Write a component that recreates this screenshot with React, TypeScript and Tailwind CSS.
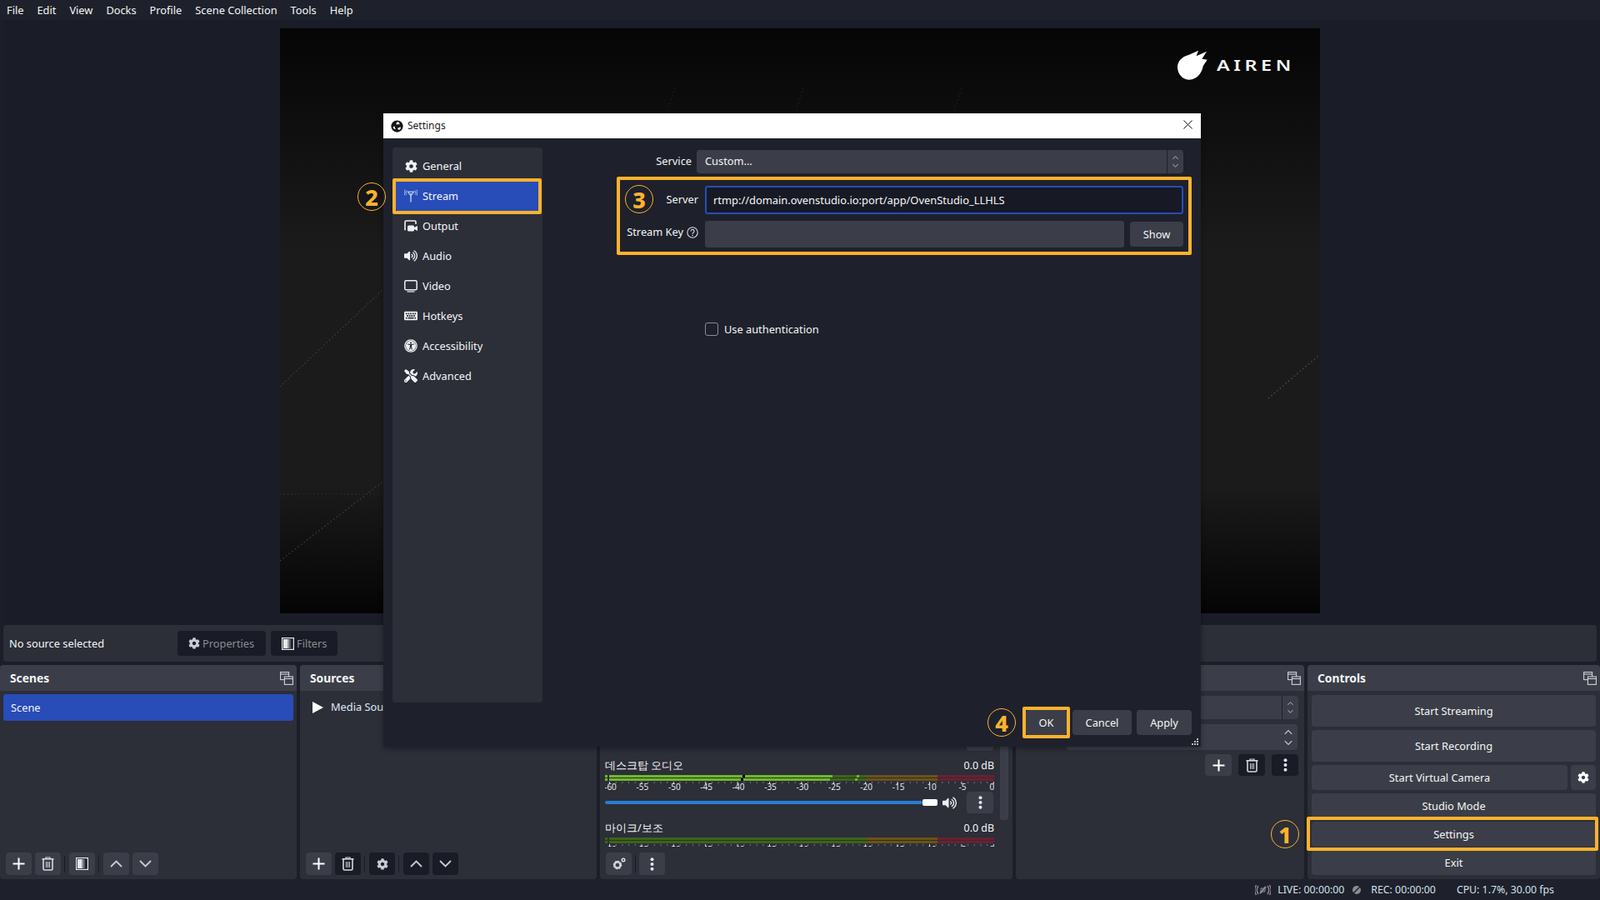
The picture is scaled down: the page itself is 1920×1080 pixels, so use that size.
import React from "react";
import { FaCog, FaVolumeUp, FaKeyboard, FaUniversalAccess, FaTools } from "react-icons/fa";

const Plus = () => (
  <svg width="15" height="15" viewBox="0 0 15 15"><path d="M7.5 0.5v14M0.5 7.5h14" stroke="#fff" strokeWidth="2" /></svg>
);
const Trash = () => (
  <svg width="15" height="17" viewBox="0 0 15 17" fill="none" stroke="#d5d7de">
    <path d="M0.5 2.8h14" strokeWidth="1.6" />
    <path d="M5 2.5V1h5v1.5" strokeWidth="1.2" />
    <path d="M2 3v11.5A1.5 1.5 0 0 0 3.5 16h8a1.5 1.5 0 0 0 1.5-1.5V3" strokeWidth="1.6" />
    <path d="M5.5 6v7M7.5 6v7M9.5 6v7" strokeWidth="1" />
  </svg>
);
const FilterIcon = () => (
  <svg width="15" height="15" viewBox="0 0 15 15">
    <rect x="0.6" y="0.6" width="13.8" height="13.8" fill="#1d1f29" stroke="#e6e7ea" strokeWidth="1.2" />
    <rect x="2" y="2" width="5" height="11" fill="#e6e7ea" />
    <rect x="7" y="2" width="2" height="11" fill="#9a9ba1" />
    <rect x="9" y="2" width="2" height="11" fill="#5a5b63" />
  </svg>
);
const Up = () => (
  <svg width="15" height="9" viewBox="0 0 15 9" fill="none"><path d="M1 8l6.5-6.5L14 8" stroke="#c9cbd2" strokeWidth="1.8" /></svg>
);
const Down = () => (
  <svg width="15" height="9" viewBox="0 0 15 9" fill="none"><path d="M1 1l6.5 6.5L14 1" stroke="#c9cbd2" strokeWidth="1.8" /></svg>
);
const Dots = () => (
  <svg width="5" height="16" viewBox="0 0 5 16" fill="#e4e5ea"><circle cx="2.5" cy="2.2" r="2" /><circle cx="2.5" cy="8" r="2" /><circle cx="2.5" cy="13.8" r="2" /></svg>
);
const FloatIcon = () => (
  <svg width="16" height="16" viewBox="0 0 16 16" fill="none" stroke="#d0d2d8" strokeWidth="1.1">
    <rect x="0.6" y="0.6" width="10" height="9" fill="#3b3e48" />
    <path d="M0.6 3h10" />
    <rect x="5.4" y="6" width="10" height="9.4" fill="#3b3e48" />
    <path d="M5.4 8.5h10" />
  </svg>
);
const Updown = ({ big }: { big?: boolean }) => (
  <svg width={big ? 12 : 9} height={big ? 22 : 16} viewBox="0 0 10 18" fill="none" stroke="#c9cbd2" strokeWidth="1">
    <path d="M1.5 5.5L5 2l3.5 3.5M1.5 12.5L5 16l3.5-3.5" />
  </svg>
);
const TwoGears = () => (
  <svg width="16" height="15" viewBox="0 0 16 15" fill="#e4e5ea">
    <circle cx="6" cy="9" r="3.6" fill="none" stroke="#e4e5ea" strokeWidth="2.6" strokeDasharray="1.8 0.3" />
    <circle cx="6" cy="9" r="4.6" fill="none" stroke="#e4e5ea" strokeWidth="1.2" strokeDasharray="1.6 2" />
    <circle cx="13" cy="3" r="1.8" fill="none" stroke="#e4e5ea" strokeWidth="1.4" />
  </svg>
);

const IconBtn = ({ dark, children }: { dark?: boolean; children: React.ReactNode }) => (
  <div className={`w-[31px] h-[27px] rounded-[4px] flex items-center justify-center shrink-0 ${dark ? "bg-[#191c26]" : "bg-[#3b3e48]"}`}>{children}</div>
);

const DockHeader = ({ title }: { title: string }) => (
  <div className="h-[31px] shrink-0 bg-[#3b3e48] rounded-t-[4px] flex items-center justify-between pl-[12px] pr-[4px]">
    <span className="font-bold text-[13.8px] pt-px">{title}</span>
    <FloatIcon />
  </div>
);

const CtlBtn = ({ label, h }: { label: string; h: string }) => (
  <div className={`${h} rounded-[4px] bg-[#3b3e48] flex items-center justify-center w-full pt-px`}>{label}</div>
);

const Circle = ({ n, cls }: { n: number; cls: string }) => (
  <div className={`absolute ${cls} w-[34px] h-[34px] rounded-full border-[1.5px] border-[#fdb22e] flex items-center justify-center text-[27px] font-extrabold text-[#fdb22e] leading-none font-['Open_Sans',sans-serif]`}>
    {n}
  </div>
);
const Box = ({ cls }: { cls: string }) => <div className={`absolute ${cls} border-[4px] border-[#fdb22e] rounded-[2px] pointer-events-none`} />;

const meterLabels = [-60, -55, -50, -45, -40, -35, -30, -25, -20, -15, -10, -5, 0];

const Meter = ({ active }: { active: boolean }) => {
  const x0 = 5;
  const pitch = 7.68;
  const green = 314;
  const yellow = 399;
  const g = active ? "#6fb82b" : "#3d6515";
  return (
    <svg width="467" height="20" className="block">
      {[0, 4].map((y) => (
        <g key={y}>
          <rect x="0" y={y} width="3" height="3" fill={g} />
          <rect x="5" y={y} width={green - 5} height="3" fill="#3d6515" />
          {active && <rect x="5" y={y} width={y === 0 ? 268 : 265} height="3" fill="#6fb82b" />}
          <rect x={green} y={y} width={yellow - green} height="3" fill="#6b5314" />
          <rect x={yellow} y={y} width={467 - yellow} height="3" fill="#6b2031" />
          {active && <rect x={y === 0 ? 165 : 163} y={y} width="3" height="3" fill="#000" />}
          {active && <rect x={y === 0 ? 302 : 300} y={y} width="3" height="3" fill="#6fb82b" />}
        </g>
      ))}
      {Array.from({ length: 61 }).map((_, i) => (
        <rect key={i} x={x0 + i * pitch} y="8" width="1" height={i % 5 === 0 ? 3 : 2} fill={i % 5 === 0 ? "#d8dae0" : "#777983"} />
      ))}
      {meterLabels.map((v, i) => (
        <text key={v} x={x0 + 1.5 + i * 38.4 - (v === 0 ? 3 : 0)} y="18" textAnchor="middle" fontSize="10" fill="#f0f2f6" fontFamily="'Open Sans',sans-serif">
          {v}
        </text>
      ))}
    </svg>
  );
};

const Channel = ({ name, active }: { name: string; active: boolean }) => (
  <div className="shrink-0 h-[75px]">
    <div className="h-[20px] flex items-center justify-between mb-px">
      <span>{name}</span>
      <span className="text-[12.4px]">0.0 dB</span>
    </div>
    <Meter active={active} />
    <div className="h-[26px] flex items-center">
      <div className="w-[381px] h-[4px] rounded-full bg-[#2a7bd5]" />
      <div className="w-[18px] h-[8px] rounded-[2px] bg-white" />
      <FaVolumeUp className="ml-[6px] text-[#eceef2] w-[17px] h-[17px]" />
      <div className="ml-[12px] w-[32px] h-[26px] rounded-[4px] bg-[#3b3e48] flex items-center justify-center">
        <Dots />
      </div>
    </div>
  </div>
);

const Antenna = () => (
  <svg width="16" height="16" viewBox="0 0 16 16" fill="none" stroke="#b4c6f2" strokeWidth="1.1">
    <path d="M4.5 3.2h7L8 8z" fill="none" strokeWidth="1.3" />
    <path d="M8 5v10.5" strokeWidth="1.5" />
    <path d="M3 1.500c-1.200 1.500-1.200 3.700 0 5.200M1 0.800c-1.200 2-1.200 4.600 0 6.600M13 1.500c1.200 1.500 1.200 3.700 0 5.200M15 0.800c1.200 2 1.200 4.600 0 6.600" strokeWidth="1" />
  </svg>
);
const OutputIcon = () => (
  <svg width="16" height="15" viewBox="0 0 16 15" fill="none">
    <path d="M2 11.5H1V2.5A1.5 1.5 0 0 1 2.5 1h10A1.5 1.5 0 0 1 14 2.5V5" stroke="#f0f1f4" strokeWidth="1.6" />
    <rect x="4" y="6.5" width="8" height="7" rx="1.5" fill="#f0f1f4" />
    <path d="M12 9l4-2v6l-4-2z" fill="#f0f1f4" />
  </svg>
);
const VideoIcon = () => (
  <svg width="16" height="15" viewBox="0 0 16 15" fill="none" stroke="#f0f1f4">
    <rect x="0.8" y="0.8" width="14.4" height="11" rx="1.6" strokeWidth="1.5" />
    <path d="M3.5 14h9" strokeWidth="1.2" />
  </svg>
);

const navItems: { label: string; icon: React.ReactNode; active?: boolean }[] = [
  { label: "General", icon: <FaCog className="w-[15px] h-[15px] text-[#f0f1f4]" /> },
  { label: "Stream", icon: <Antenna />, active: true },
  { label: "Output", icon: <OutputIcon /> },
  { label: "Audio", icon: <FaVolumeUp className="w-[16px] h-[16px] text-[#f0f1f4]" /> },
  { label: "Video", icon: <VideoIcon /> },
  { label: "Hotkeys", icon: <FaKeyboard className="w-[16px] h-[16px] text-[#f0f1f4]" /> },
  { label: "Accessibility", icon: <FaUniversalAccess className="w-[16px] h-[16px] text-[#f0f1f4]" /> },
  { label: "Advanced", icon: <FaTools className="w-[16px] h-[16px] text-[#f0f1f4]" /> },
];

const DlgBtn = ({ w, children }: { w: string; children: string }) => (
  <div className={`${w} h-[30px] rounded-[4px] bg-[#3b3e48] flex items-center justify-center pt-px`}>{children}</div>
);

const Settings = () => (
  <div className="absolute left-[460px] top-[136px] w-[981px] h-[760px] bg-[#1e212b] flex flex-col shadow-[0_2px_6px_rgba(0,0,0,0.35)]">
    <div className="h-[30px] shrink-0 bg-white flex items-center pl-[9px] pr-[10px] text-[#1a1a1a] text-[12px]">
      <svg width="15" height="15" viewBox="0 0 16 16">
        <circle cx="8" cy="8" r="7.6" fill="#151515" />
        <path d="M8.5 2.5a3 3 0 0 1 2.5 3.5c-1-1.2-3.2-1-3.4 0.5C6.500 5.500 6.800 3.300 8.500 2.500z" fill="#fff" />
        <path d="M2.800 9.500a3 3 0 0 0 3.800 1.900c-1.500-.5-2-2.500-.9-3.500-1.500.2-3 .5-2.900 1.600z" fill="#fff" />
        <path d="M11 12.500a3 3 0 0 0 .8-4.300c-.2 1.500-2 2.500-3.300 1.800.4 1.400 1.300 3 2.500 2.500z" fill="#fff" />
      </svg>
      <span className="ml-[5px]">Settings</span>
      <svg className="ml-auto mb-[3px]" width="11" height="11" viewBox="0 0 11 11"><path d="M0.500 0.500l10 10M10.500 0.500l-10 10" stroke="#1a1a1a" strokeWidth="1" /></svg>
    </div>
    <div className="flex-1 flex min-h-0">
      <div className="ml-[11px] mt-[11px] w-[180px] h-[666px] rounded-[4px] bg-[#2c2e38] flex flex-col pt-[4px] shrink-0">
        {navItems.map((it) => (
          <div key={it.label} className={`h-[36px] shrink-0 flex items-center mx-[4px] ${it.active ? "bg-[#284cb8] rounded-[3px]" : ""}`}>
            <div className="w-[32px] pl-[10px] flex justify-start items-center">
              <div className="w-[16px] flex justify-center">{it.icon}</div>
            </div>
            <span className="pt-px">{it.label}</span>
          </div>
        ))}
      </div>
      <div className="flex-1 flex flex-col min-w-0">
        <div className="mt-[14px] flex items-center h-[28px]">
          <div className="w-[179px] text-right">Service</div>
          <div className="ml-[6px] w-[584px] h-[28px] rounded-[4px] bg-[#3b3e48] flex items-center pl-[10px]">
            <span>Custom...</span>
            <div className="ml-auto w-[20px] h-full border-l border-[#1e212b] flex items-center justify-center"><Updown /></div>
          </div>
        </div>
        <div className="mt-[15px] flex items-center h-[34px]">
          <div className="w-[187px] text-right">Server</div>
          <div className="ml-[8px] w-[574px] h-[34px] rounded-[3px] border-2 border-[#284cb8] bg-[#171a24] flex items-center pl-[8px] text-[12.9px] pt-px">
            rtmp://domain.ovenstudio.io:port/app/OvenStudio_LLHLS
          </div>
        </div>
        <div className="mt-[8px] flex items-center h-[32px]">
          <div className="w-[187px] flex items-center justify-end mb-[4px]">
            <span>Stream Key</span>
            <svg className="ml-[4px]" width="14" height="14" viewBox="0 0 14 14" fill="none">
              <circle cx="7" cy="7" r="6.200" stroke="#d8dae0" strokeWidth="1.100" />
              <path d="M5 5.500a2 2 0 1 1 3 1.700c-.7.400-1 .8-1 1.500" stroke="#d8dae0" strokeWidth="1.200" />
              <circle cx="7" cy="10.500" r="0.800" fill="#d8dae0" />
            </svg>
          </div>
          <div className="ml-[8px] w-[503px] h-[32px] rounded-[3px] bg-[#3b3e48]" />
          <div className="ml-[7px]"><DlgBtn w="w-[64px]">Show</DlgBtn></div>
        </div>
        <div className="mt-[90px] ml-[195px] flex items-center h-[16px]">
          <div className="w-[16px] h-[16px] rounded-[3px] border-[1.5px] border-[#8a8c94] bg-[#1e212b]" />
          <span className="ml-[7px] pt-px">Use authentication</span>
        </div>
        <div className="mt-auto mb-[14px] mr-[11px] flex justify-end gap-[6px]">
          <div className="mr-px"><DlgBtn w="w-[49px]">OK</DlgBtn></div>
          <DlgBtn w="w-[71px]">Cancel</DlgBtn>
          <DlgBtn w="w-[66px]">Apply</DlgBtn>
        </div>
      </div>
    </div>
    <svg className="absolute right-[3px] bottom-[2px]" width="8" height="8" viewBox="0 0 8 8" fill="#b8bac2">
      <rect x="6" y="0" width="2" height="2" /><rect x="3" y="3" width="2" height="2" /><rect x="6" y="3" width="2" height="2" />
      <rect x="0" y="6" width="2" height="2" /><rect x="3" y="6" width="2" height="2" /><rect x="6" y="6" width="2" height="2" />
    </svg>
  </div>
);

const Vr = () => <div className="w-px h-[20px] bg-[#191c26] mr-px shrink-0" />;

export default function App() {
  return (
    <div className="relative w-[1920px] h-[1080px] overflow-hidden bg-[#1c1e29] text-[#f4f5f7] flex flex-col font-['Open_Sans','Noto_Sans_CJK_KR',sans-serif] text-[12.8px]">
      <div className="h-[24px] shrink-0 bg-[#1e212b] flex items-center gap-[16px] pl-[8px] pt-px">
        {["File", "Edit", "View", "Docks", "Profile", "Scene Collection", "Tools", "Help"].map((m) => (
          <span key={m}>{m}</span>
        ))}
      </div>
      <div className="h-[726px] shrink-0 bg-[#1a1c28] ml-[4px] pl-[332px] pt-[10px]">
        <div className="relative w-[1248px] h-[702px] bg-[linear-gradient(180deg,#050505_0%,#1b1b1b_38%,#1b1b1b_78%,#040404_100%)]">
          <svg className="absolute inset-0" width="1248" height="702" fill="none" stroke="#3a3a3a" strokeWidth="1.500" strokeDasharray="1.500 3">
            <path d="M0 430L122 315M0 639L122 545" />
            <path d="M0 559L122 559" stroke="#2a2a2a" />
            <path d="M1186 444L1246 393" stroke="#4a4a4a" />
            <path d="M474 72L464 102M628 72L618 102M818 72L808 102" stroke="#1f1f1f" />
          </svg>
          <div className="absolute left-[1077px] top-[26px] flex items-center">
            <svg width="36" height="36" viewBox="0 0 108 108" fill="#fff">
              <path d="M0 58C2 38 20 22 40 18L75 2L68 22L105 5L88 32L107 35L92 58C90 78 72 108 40 107C16 106 -1 84 0 58Z" />
            </svg>
            <span className="ml-[11px] text-[18px] font-semibold tracking-[3.500px] font-['Inter',sans-serif] leading-none scale-x-[1.3] origin-left">AIREN</span>
          </div>
        </div>
      </div>
      <div className="mx-[4px] h-[44px] shrink-0 rounded-[4px] bg-[#2c2e38] flex items-center pl-[7px]">
        <span className="w-[202px] pt-px">No source selected</span>
        <div className="w-[106px] h-[30px] rounded-[4px] bg-[#191c26] flex items-center pl-[13px] text-[#8b8d95]">
          <FaCog className="w-[14px] h-[14px] text-[#c9cbd2]" />
          <span className="ml-[3px] pt-px">Properties</span>
        </div>
        <div className="ml-[6px] w-[80px] h-[30px] rounded-[4px] bg-[#191c26] flex items-center pl-[13px] text-[#8b8d95]">
          <FilterIcon />
          <span className="ml-[3px] pt-px">Filters</span>
        </div>
      </div>
      <div className="mt-[4px] h-[257px] shrink-0 flex gap-[4px]">
        <div className="w-[356px] rounded-[4px] bg-[#2c2e38] flex flex-col">
          <DockHeader title="Scenes" />
          <div className="mx-[4px] mt-[4px] h-[32px] rounded-[3px] bg-[#284cb8] flex items-center pl-[9px] pt-px">Scene</div>
          <div className="mt-auto mb-[5px] ml-[7px] flex items-center gap-[4px]">
            <IconBtn><Plus /></IconBtn>
            <IconBtn><Trash /></IconBtn>
            <Vr />
            <IconBtn><FilterIcon /></IconBtn>
            <Vr />
            <IconBtn><Up /></IconBtn>
            <IconBtn><Down /></IconBtn>
          </div>
        </div>
        <div className="w-[356px] rounded-[4px] bg-[#2c2e38] flex flex-col">
          <DockHeader title="Sources" />
          <div className="mt-[11px] ml-[15px] h-[18px] flex items-center">
            <svg width="13" height="14" viewBox="0 0 13 14" fill="#fff"><path d="M0 0l13 7-13 7z" /></svg>
            <span className="ml-[9px] text-[#dfe8f7]">Media Source</span>
          </div>
          <div className="mt-auto mb-[5px] ml-[7px] flex items-center gap-[4px]">
            <IconBtn><Plus /></IconBtn>
            <IconBtn dark><Trash /></IconBtn>
            <Vr />
            <IconBtn dark><FaCog className="w-[14px] h-[14px] text-[#c9cbd2]" /></IconBtn>
            <Vr />
            <IconBtn dark><Up /></IconBtn>
            <IconBtn dark><Down /></IconBtn>
          </div>
        </div>
        <div className="w-[495px] rounded-[4px] bg-[#2c2e38] flex flex-col">
          <DockHeader title="Audio Mixer" />
          <div className="h-[187px] overflow-hidden flex pl-[6px]">
            <div className="w-[467px] pt-[5px] flex flex-col gap-0 shrink-0">
              <Channel name="Media Source" active={false} />
              <Channel name="데스크탑 오디오" active />
              <Channel name="마이크/보조" active={false} />
            </div>
            <div className="ml-[7px] w-[10px] h-[155px] bg-[#3b3e48] rounded-[3px] shrink-0" />
          </div>
          <div className="mt-[7px] ml-[7px] flex items-center">
            <IconBtn><TwoGears /></IconBtn>
            <div className="w-px h-[20px] bg-[#191c26] mx-[4px]" />
            <IconBtn><Dots /></IconBtn>
          </div>
        </div>
        <div className="w-[346px] rounded-[4px] bg-[#2c2e38] flex flex-col">
          <DockHeader title="Scene Transitions" />
          <div className="mt-[6px] ml-[61px] w-[278px] h-[28px] rounded-[4px] bg-[#3b3e48] flex items-center">
            <div className="ml-auto w-[20px] h-full border-l border-[#1e212b] flex items-center justify-center"><Updown /></div>
          </div>
          <div className="mt-[6px] ml-[61px] w-[277px] h-[31px] rounded-[4px] bg-[#3b3e48] flex items-center justify-end pr-[5px]">
            <Updown big />
          </div>
          <div className="mt-[5px] ml-[227px] flex gap-[8px]">
            <div className="w-[32px] h-[26px] rounded-[4px] bg-[#3b3e48] flex items-center justify-center"><Plus /></div>
            <div className="w-[32px] h-[26px] rounded-[4px] bg-[#191c26] flex items-center justify-center"><Trash /></div>
            <div className="w-[32px] h-[26px] rounded-[4px] bg-[#191c26] flex items-center justify-center"><Dots /></div>
          </div>
        </div>
        <div className="flex-1 rounded-[4px] bg-[#2c2e38] flex flex-col">
          <DockHeader title="Controls" />
          <div className="flex-1 flex flex-col gap-[4px] px-[5px] pt-[5px]">
            <CtlBtn label="Start Streaming" h="h-[38px]" />
            <CtlBtn label="Start Recording" h="h-[38px]" />
            <div className="flex gap-[4px]">
              <div className="flex-1"><CtlBtn label="Start Virtual Camera" h="h-[30px]" /></div>
              <div className="w-[30px] h-[30px] rounded-[4px] bg-[#3b3e48] flex items-center justify-center"><FaCog className="w-[14px] h-[14px] text-white" /></div>
            </div>
            <CtlBtn label="Studio Mode" h="h-[30px]" />
            <CtlBtn label="Settings" h="h-[30px]" />
            <CtlBtn label="Exit" h="h-[30px]" />
          </div>
        </div>
      </div>
      <div className="h-[25px] shrink-0 bg-[#1e212b] flex items-center justify-end pr-[55px] pt-px text-[#d5e0f0] text-[12.3px]">
        <svg width="19" height="14" viewBox="0 0 19 14" fill="none" stroke="#8a8c94" strokeWidth="1.400">
          <path d="M4 2c-2 3-2 7 0 10M1.500 1c-2 3.500-2 8.500 0 12M15 2c2 3 2 7 0 10M17.500 1c2 3.500 2 8.500 0 12" />
          <path d="M6 11l7-8" strokeWidth="2" />
          <path d="M7 5h5v4h-5z" strokeWidth="1" />
        </svg>
        <span className="ml-[8px]">LIVE: 00:00:00</span>
        <svg className="ml-[9px]" width="12" height="12" viewBox="0 0 12 12"><circle cx="6" cy="6" r="5" fill="#8a8c94" /><path d="M1 11L11 1" stroke="#1e212b" strokeWidth="1.500" /></svg>
        <span className="ml-[11px]">REC: 00:00:00</span>
        <span className="ml-[25px]">CPU: 1.7%, 30.00 fps</span>
      </div>

      <Settings />

      <Box cls="left-[471px] top-[214px] w-[179px] h-[43px]" />
      <Box cls="left-[740px] top-[212px] w-[690px] h-[94px]" />
      <Box cls="left-[1227px] top-[848px] w-[57px] h-[38px]" />
      <Box cls="left-[1568px] top-[980px] w-[350px] h-[41px]" />
      <Circle n={1} cls="left-[1525px] top-[984px]" />
      <Circle n={2} cls="left-[429px] top-[219px]" />
      <Circle n={3} cls="left-[750px] top-[222px]" />
      <Circle n={4} cls="left-[1185px] top-[850px]" />
    </div>
  );
}
